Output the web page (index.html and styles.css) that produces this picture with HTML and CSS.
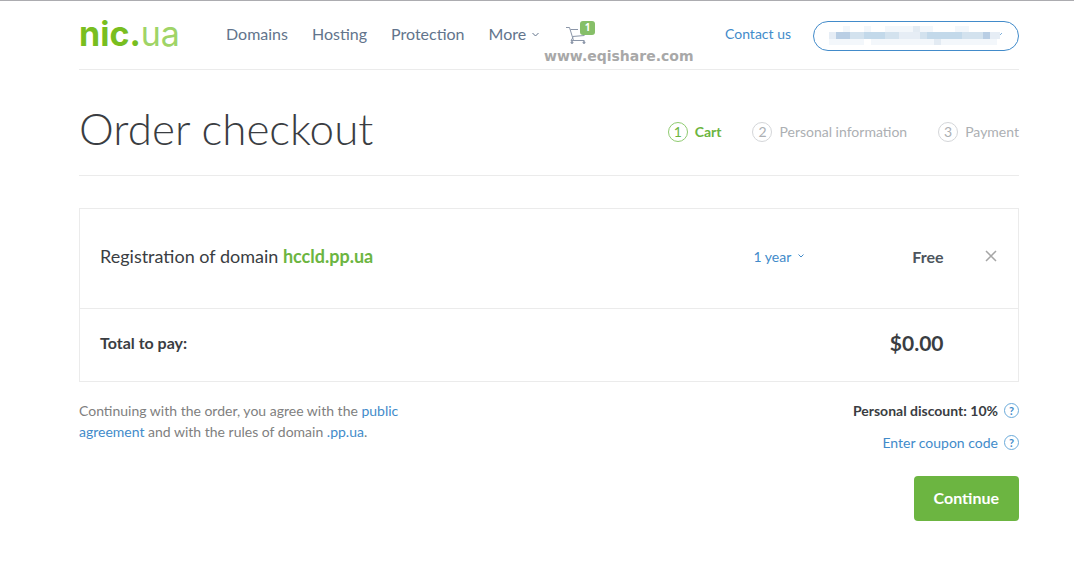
FILE: index.html
```html
<!DOCTYPE html>
<html lang="en">
<head>
<meta charset="utf-8">
<meta name="viewport" content="width=device-width, initial-scale=1">
<title>Order checkout</title>
<link rel="stylesheet" href="styles.css">
</head>
<body>
<div class="page">
  <header class="header">
    <a class="logo" href="#"><span class="logo-name">nic.</span><span class="logo-zone">ua</span></a>
    <nav class="nav">
      <a href="#">Domains</a>
      <a href="#">Hosting</a>
      <a href="#">Protection</a>
      <a href="#" class="more">More <svg width="7" height="5" viewBox="0 0 7 5"><path d="M.5 1 3.500 4 6.500 1" fill="none" stroke="currentColor"/></svg></a>
    </nav>
    <a class="cart" href="#" aria-label="Shopping cart">
      <svg width="22" height="19" viewBox="0 0 22 19" fill="none" stroke="#8b96a8"><path d="M0 1.500h3.500L7.500 14.500M4.500 3.500H12M6.500 10.500 18.500 9.500M7 11.500 5 14.500h13.500"/><circle cx="6" cy="16.500" r="1" fill="#8b96a8"/><circle cx="18" cy="16.500" r="1" fill="#8b96a8"/></svg>
      <span class="badge">1</span>
    </a>
    <span class="watermark">www.eqishare.com</span>
    <a class="contact" href="#">Contact us</a>
    <button class="account" type="button" aria-label="Account">
      <svg width="174" height="22" viewBox="0 0 174 22" shape-rendering="crispEdges">
        <path fill="#f3f7fb" d="M14 1h7v6h-7zM35 1h7v6h-7zM56 1h48v6H56zM126 1h14v6h-14zM0 14h35v6H0zM42 14h126v6H42z"/>
        <path fill="#e3ebf3" d="M84 1h7v6h-7zM105 14h7v6h-7z"/>
        <path fill="#d3e2ee" d="M0 7h168v7H0z"/>
        <path fill="#b9cee4" d="M7 7h14v7H7zM154 7h7v7h-7z"/>
        <path fill="#c3d9ea" d="M35 7h21v7H35zM98 7h35v7H98z"/>
        <path fill="#e6edf5" d="M0 7h7v7H0zM70 7h21v7H70zM161 7h10v7h-10z"/>
        <path d="m171 10 2-2" stroke="#7fb0db"/>
      </svg>
    </button>
  </header>

  <main>
    <div class="heading">
      <h1>Order checkout</h1>
      <ol class="steps">
        <li class="current"><span class="num">1</span>Cart</li>
        <li><span class="num">2</span>Personal information</li>
        <li><span class="num">3</span>Payment</li>
      </ol>
    </div>

    <table class="order">
      <tbody>
        <tr class="item">
          <td class="name">Registration of domain <b>hccld.pp.ua</b></td>
          <td class="period"><span class="picker"><select aria-label="Period"><option>1 year</option></select><svg width="6" height="4" viewBox="0 0 6 4"><path d="M.5.500 3 3 5.500.500" fill="none" stroke="currentColor"/></svg></span></td>
          <td class="price">Free</td>
          <td class="remove"><button type="button" aria-label="Remove"><svg width="12" height="12" viewBox="0 0 12 12"><path d="m1 1 10 10M11 1 1 11" stroke="#a6a6a6" stroke-width="1.500"/></svg></button></td>
        </tr>
        <tr class="total">
          <th scope="row">Total to pay:</th>
          <td></td>
          <td class="price">$0.00</td>
          <td></td>
        </tr>
      </tbody>
    </table>

    <div class="bottom">
      <p class="terms">Continuing with the order, you agree with the <a href="#">public agreement</a> and with the rules of domain <a href="#">.pp.ua</a>.</p>
      <div class="actions">
        <div class="line"><b>Personal discount: 10%</b><button class="help" type="button">?</button></div>
        <div class="line"><a href="#">Enter coupon code</a><button class="help" type="button">?</button></div>
        <button class="continue" type="button">Continue</button>
      </div>
    </div>
  </main>
</div>
</body>
</html>
```
FILE: styles.css
```css
* { box-sizing: border-box; }
body {
  margin: 0;
  border-top: 1px solid #acacb0;
  background: #fff;
  color: #3a3d42;
  font: 14px/21px Lato, "Open Sans", sans-serif;
}
a { color: #428bca; text-decoration: none; }
button { padding: 0; border: 0; background: none; font: inherit; cursor: pointer; }
svg { display: block; }
.page { padding: 0 55px 0 79px; }

.header {
  position: relative;
  display: flex;
  align-items: center;
  height: 69px;
  border-bottom: 1px solid #ebebeb;
}
.logo { width: 147px; padding-bottom: 2px; font: 34px/40px Inter, sans-serif; }
.logo-name { color: #78be20; font-weight: 700; }
.logo-zone { color: #9fd467; }
.nav { display: flex; gap: 24px; padding-bottom: 4px; font-size: 16px; }
.nav a { color: #62748c; }
.nav .more { display: flex; align-items: center; gap: 6px; }
.nav svg { margin-top: 3px; }
.cart { position: relative; margin-left: 27px; }
.badge {
  position: absolute;
  left: 14px;
  top: -5px;
  width: 15px;
  height: 14px;
  border-radius: 3px;
  background: #86bf68;
  color: #fff;
  font: 700 10px/12px "Open Sans", sans-serif;
  text-align: center;
}
.watermark {
  position: absolute;
  left: 465px;
  top: 46px;
  color: #a8a8a8;
  font: 700 14px/18px "DejaVu Sans", sans-serif;
}
.contact { margin-left: auto; padding-bottom: 4px; }
.account {
  display: flex;
  justify-content: center;
  align-items: center;
  width: 206px;
  height: 30px;
  margin: 2px 0 0 22px;
  border: 1px solid #428bca;
  border-radius: 15px;
}

.heading {
  display: flex;
  justify-content: space-between;
  align-items: center;
  padding: 28px 0 16px;
  border-bottom: 1px solid #ebebeb;
}
h1 { margin: 0; font-size: 44px; line-height: 61px; font-weight: 300; }
.steps { display: flex; gap: 31px; margin: 0; padding: 6px 0 0; list-style: none; color: #acafb3; }
.steps li { display: flex; align-items: center; gap: 7px; }
.num { width: 20px; height: 20px; border: 1px solid #d4d6d9; border-radius: 50%; line-height: 18px; text-align: center; }
.steps .current { color: #6cb541; font-weight: 700; }
.current .num { border-color: #8fcb70; font-weight: 400; }

.order { width: 100%; margin-top: 32px; border: 1px solid #ebebeb; border-collapse: collapse; }
.order td, .order th { padding: 0; }
.order .item td { height: 100px; padding-bottom: 5px; }
.order .total th, .order .total td { height: 73px; padding-bottom: 5px; border-top: 1px solid #ebebeb; }
.order .name, .order th { padding-left: 20px; text-align: left; }
.order th { font-size: 16px; }
.name { font-size: 18px; }
.name b { color: #6cb541; }
.period { width: 90px; }
.picker { display: flex; align-items: center; gap: 5px; color: #428bca; }
.picker select { padding: 0; border: 0; background: none; color: inherit; font: inherit; appearance: none; }
.price { width: 100px; text-align: right; font-size: 16px; font-weight: 700; color: #4d555d; }
.total .price { font-size: 21px; color: #3a3d42; }
.remove { width: 75px; }
.remove button { display: block; margin-left: 41px; }

.bottom { display: flex; justify-content: space-between; align-items: flex-start; margin-top: 18px; }
.terms { max-width: 340px; margin: 0; color: #808080; }
.actions { display: flex; flex-direction: column; align-items: flex-end; gap: 11px; }
.line { display: flex; align-items: center; gap: 6px; }
.help { width: 15px; height: 15px; border: 1px solid #6aaada; border-radius: 50%; color: #428bca; font-size: 11px; font-weight: 700; line-height: 13px; }
.continue {
  height: 45px;
  margin-top: 12px;
  padding: 0 20px 3px;
  border-radius: 4px;
  background: #6cb541;
  color: #fff;
  font-size: 16px;
  font-weight: 700;
}
```
